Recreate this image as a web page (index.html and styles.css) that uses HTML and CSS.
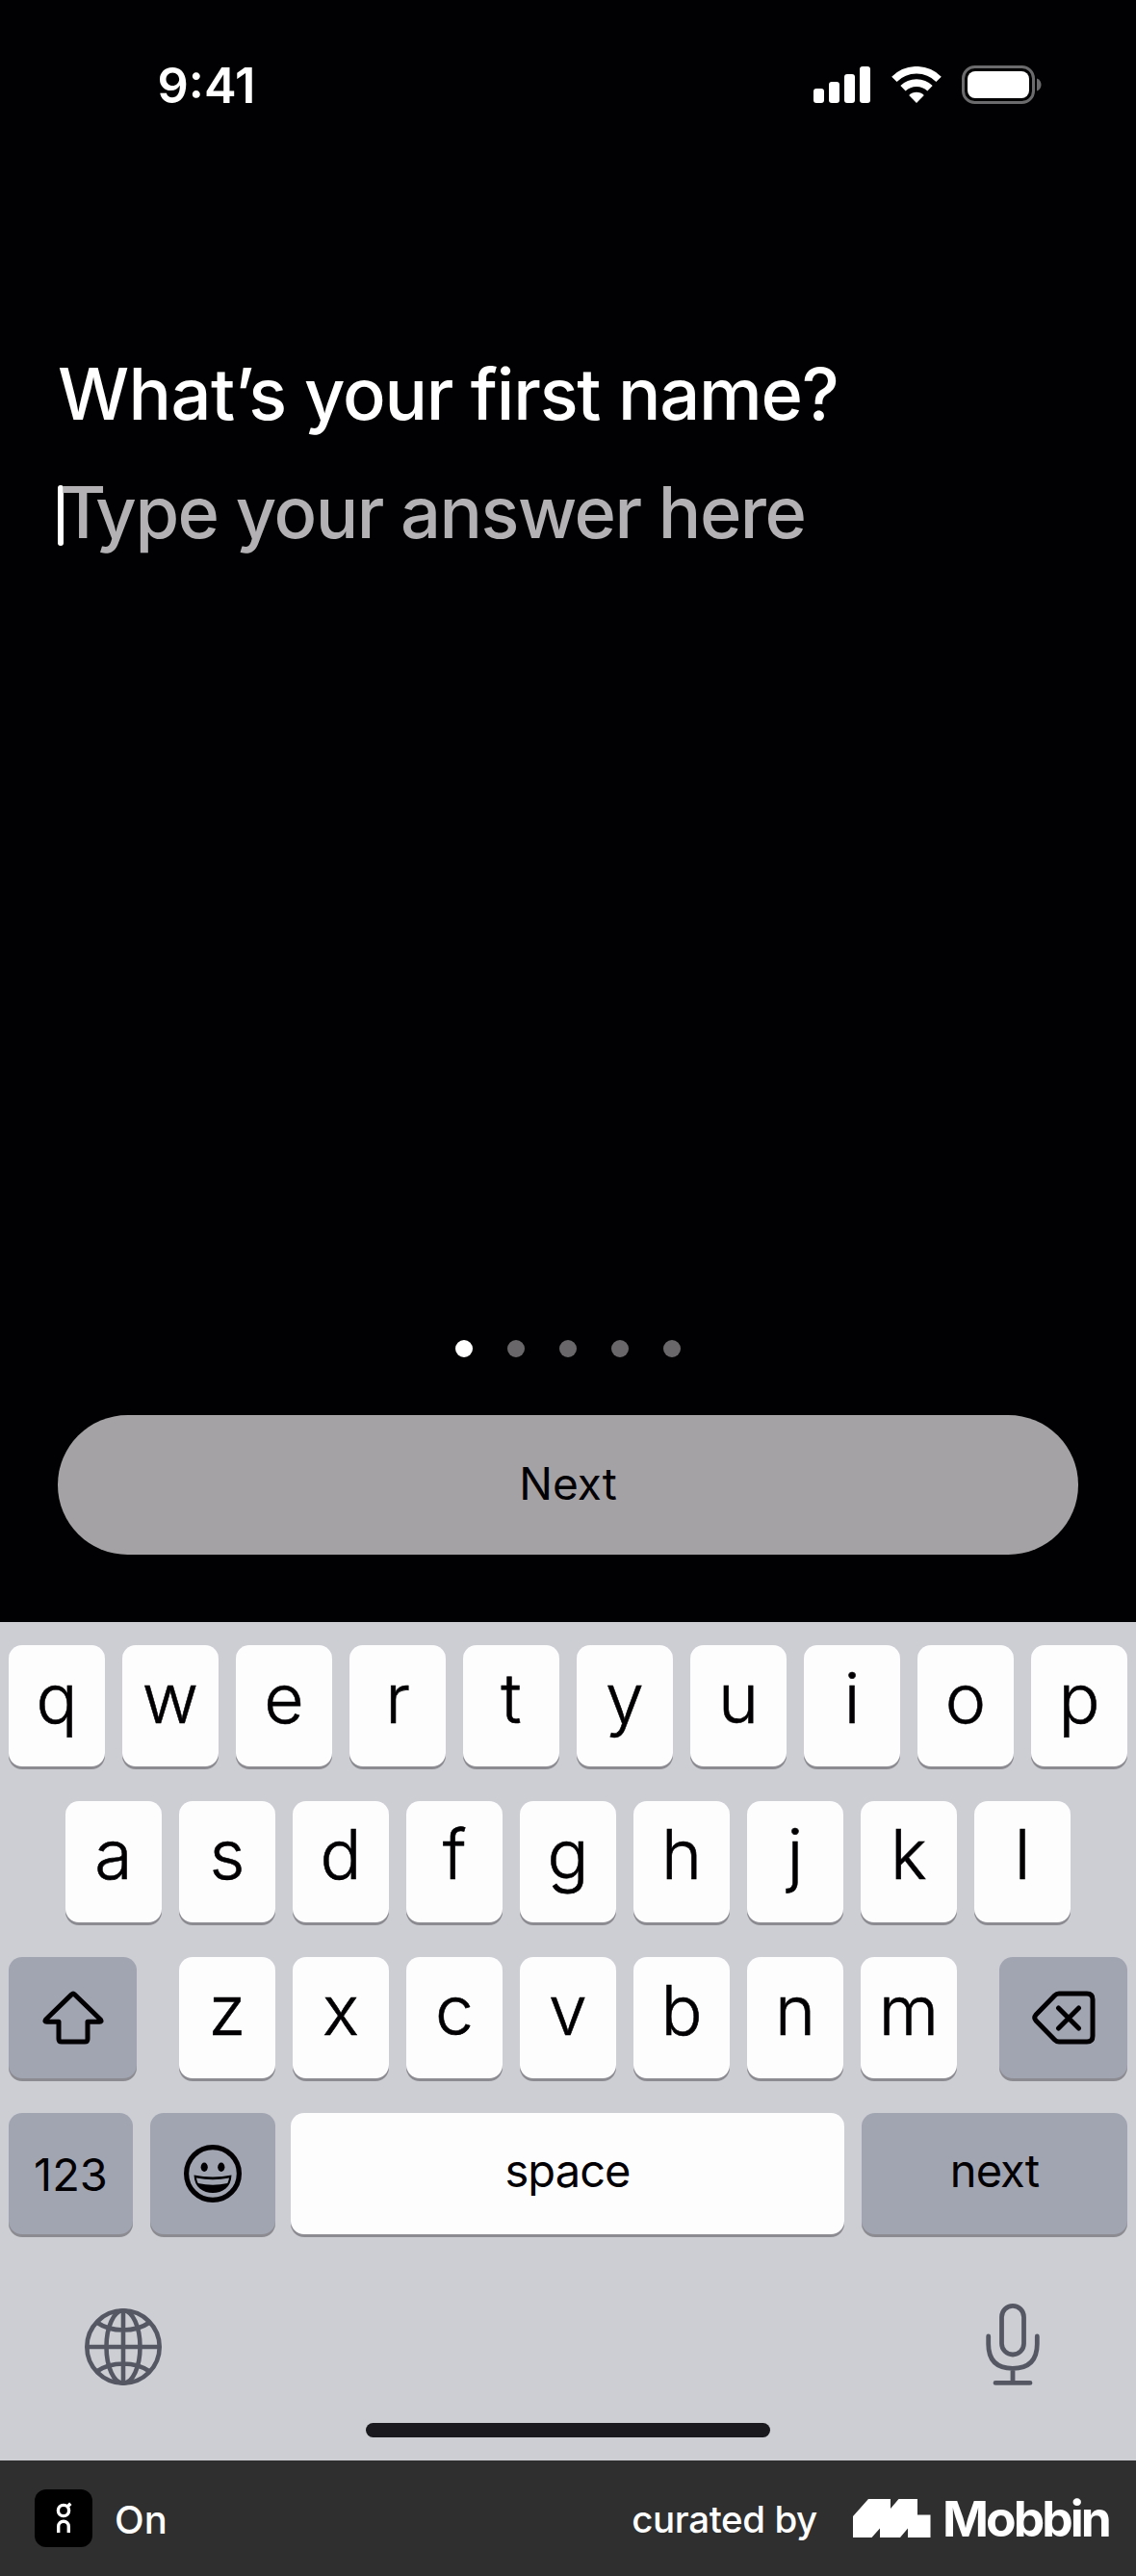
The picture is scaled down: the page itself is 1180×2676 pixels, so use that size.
FILE: index.html
```html
<!DOCTYPE html>
<html lang="en">
<head>
<meta charset="utf-8">
<title>What’s your first name?</title>
<link rel="stylesheet" href="styles.css">
</head>
<body>
<main class="screen">
  <header class="status">
    <span class="time">9:41</span>
    <div class="indicators">
      <svg class="signal" width="59" height="38" viewBox="0 0 59 38" fill="#fff">
        <rect x="0" y="23" width="11" height="15" rx="3"/><rect x="16" y="16" width="11" height="22" rx="3"/><rect x="32" y="8" width="11" height="30" rx="3"/><rect x="48" y="0" width="11" height="38" rx="3"/>
      </svg>
      <svg class="wifi" width="52" height="38" viewBox="0 0 52 38">
        <g fill="none" stroke="#fff" stroke-width="7.600"><path d="M2.900 13.400a32.500 32.500 0 0 1 46.200 0"/><path d="M12 22.800a20 20 0 0 1 28 0"/></g>
        <path d="M26 38l-7.800-8.100a11 11 0 0 1 15.600 0z" fill="#fff"/>
      </svg>
      <svg class="battery" width="83" height="40" viewBox="0 0 83 40">
        <rect x="1.500" y="1.500" width="73" height="37" rx="12" fill="none" stroke="#6b6a6c" stroke-width="3"/>
        <rect x="6" y="6" width="64" height="28" rx="8" fill="#fff"/>
        <path d="M78 13.500c6 2 6 11 0 13z" fill="#6b6a6c"/>
      </svg>
    </div>
  </header>

  <section class="question">
    <h1 class="title"><span class="lead">What’s</span> your first name?</h1>
    <div class="answer"><i class="caret"></i><span class="placeholder"><span class="kern">T</span>ype your answer here</span></div>
  </section>

  <section class="actions">
    <div class="dots"><i class="dot on"></i><i class="dot"></i><i class="dot"></i><i class="dot"></i><i class="dot"></i></div>
    <button class="next">Next</button>
  </section>
</main>

<section class="keyboard">
  <div class="row"><b class="key">q</b><b class="key">w</b><b class="key">e</b><b class="key">r</b><b class="key">t</b><b class="key">y</b><b class="key">u</b><b class="key">i</b><b class="key">o</b><b class="key">p</b></div>
  <div class="row"><b class="key">a</b><b class="key">s</b><b class="key">d</b><b class="key">f</b><b class="key">g</b><b class="key">h</b><b class="key">j</b><b class="key">k</b><b class="key">l</b></div>
  <div class="row spread">
    <b class="key fn side">
      <svg width="64" height="56" viewBox="0 0 64 56" fill="none" stroke="#020003" stroke-width="5" stroke-linejoin="round"><path d="M30.400 3.900q1.600-1.600 3.200 0L60.500 30q1.500 2.300-1 2.300H47V50q0 3-3 3H20q-3 0-3-3V32.300H4.500q-2.500 0-1-2.300z"/></svg>
    </b>
    <div class="row"><b class="key">z</b><b class="key">x</b><b class="key">c</b><b class="key">v</b><b class="key">b</b><b class="key">n</b><b class="key">m</b></div>
    <b class="key fn side">
      <svg width="66" height="56" viewBox="0 0 66 56" fill="none" stroke="#020003" stroke-width="5" stroke-linejoin="round" stroke-linecap="round"><path d="M28 3H57q6 0 6 6V47q0 6-6 6H28q-2.500 0-4.500-2L4 31q-2.500-3 0-6L23.500 5q2-2 4.500-2zM27.500 18l21 21M48.500 18l-21 21"/></svg>
    </b>
  </div>
  <div class="row bottom">
    <b class="key fn num">123</b>
    <b class="key fn emoji">
      <svg width="60" height="60" viewBox="0 0 60 60"><circle cx="30" cy="30" r="27.400" fill="none" stroke="#020003" stroke-width="5.200"/><ellipse cx="21.200" cy="23.200" rx="3.600" ry="4.700" fill="#020003"/><ellipse cx="38.800" cy="23.200" rx="3.600" ry="4.700" fill="#020003"/><path d="M10.500 31.500q19.500 4 39 0-.5 9.500-6 14-6 4.500-13.500 4.500t-13.500-4.500q-5.500-4.500-6-14z" fill="#020003"/><path d="M13 34.500q17 3.500 34 0-.4 3-1.700 5.500-15.300 3.500-30.600 0Q13.400 37.500 13 34.500z" fill="#a1a5b1"/></svg>
    </b>
    <b class="key word space">space</b>
    <b class="key fn word go">next</b>
  </div>
  <div class="tools">
    <svg width="80" height="80" viewBox="0 0 80 80" fill="none" stroke="#555863" stroke-width="4.600"><circle cx="40" cy="40" r="37.700"/><ellipse cx="40" cy="40" rx="17.500" ry="37.700"/><path d="M40 2v76M2 40h76M12.500 14.500Q24 22.500 40 22.500T67.500 14.500M12.500 65.500Q24 57.500 40 57.500T67.500 65.500"/></svg>
    <svg width="56" height="85" viewBox="0 0 56 85" fill="none" stroke="#555863" stroke-width="4.800" stroke-linecap="round"><rect x="16.500" y="2.400" width="23" height="50.600" rx="11.500"/><path d="M2.700 34v8q0 25.300 25.300 25.300T53.300 42v-8M28 68v14M10 82.400h36"/></svg>
  </div>
  <div class="home"></div>
</section>

<footer class="footer">
  <svg class="app" width="60" height="60" viewBox="0 0 60 60"><rect width="60" height="60" rx="12"/><g fill="none" stroke="#fff" stroke-width="3.400"><circle cx="30" cy="22" r="5.600"/><path d="M33.500 18.500l3.800-3.800M24.700 45v-6.500a5.300 5.300 0 0 1 10.600 0V45"/></g></svg>
  <span class="name">On</span>
  <span class="curated">curated by</span>
  <svg class="mark" width="81" height="40" viewBox="0 0 81 40" fill="#fff"><path d="M0 18L16 0h23v10L47.500 0H67v16.500h13.500V40H57V30.500L49 40H28V30.500L19.500 40H0z"/></svg>
  <span class="brand">Mobbin</span>
</footer>
</body>
</html>
```
FILE: styles.css
```css
* { box-sizing: border-box; }
body {
  margin: 0;
  width: 1180px;
  height: 2676px;
  display: flex;
  flex-direction: column;
  background: #010002;
  color: #fff;
  font-family: Inter, "Liberation Sans", sans-serif;
}
svg { display: block; flex: none; }

.screen { height: 1685px; display: flex; flex-direction: column; }
.status {
  height: 176px;
  padding: 0 98px 0 163.500px;
  display: flex;
  align-items: center;
  justify-content: space-between;
}
.time { margin-top: 2px; font-size: 50.500px; font-weight: 600; line-height: 60px; }
.indicators { display: flex; align-items: center; }
.wifi { margin: 0 21px 0 22px; }

.question { padding: 186px 60px 0; }
.title, .answer { margin: 0; height: 94px; font-size: 74px; font-weight: 500; line-height: 94px; white-space: nowrap; }
.title { letter-spacing: -1.200px; }
.lead { letter-spacing: -.600px; }
.answer { margin-top: 29px; display: flex; align-items: center; letter-spacing: -1.500px; color: #b3b1b4; }
.caret { width: 6px; height: 63px; margin-top: 6px; border-radius: 3px; background: #fff; }
.placeholder { margin-left: -4px; }
.kern { letter-spacing: -11px; }

.actions { margin-top: auto; padding: 0 60px 70px; }
.dots { display: flex; justify-content: center; gap: 36px; }
.dot { width: 18px; height: 18px; border-radius: 50%; background: #69676a; }
.dot.on { background: #fff; }
.next {
  display: block;
  width: 1060px;
  height: 145px;
  margin-top: 60px;
  padding: 0 0 4px;
  border: 0;
  border-radius: 73px;
  background: #a4a2a5;
  color: #020003;
  font: 400 46px Inter, sans-serif;
}

.keyboard {
  height: 871px;
  padding-top: 24px;
  display: flex;
  flex-direction: column;
  gap: 36px;
  background: #cdced4;
  color: #020003;
}
.row { display: flex; justify-content: center; gap: 18px; }
.spread { justify-content: space-between; padding: 0 9px; }
.key {
  width: 100px;
  height: 126px;
  padding-bottom: 15px;
  display: flex;
  align-items: center;
  justify-content: center;
  border-radius: 14px;
  background: #fefdfe;
  box-shadow: 0 3px 0 #8b8b91;
  font-size: 71.500px;
  font-weight: 300;
  line-height: 1;
  -webkit-text-stroke: .6px #020003;
}
.fn { background: #a1a5b1; padding-bottom: 0; }
.side { width: 133px; }
.bottom { padding: 0 9px; }
.num, .word { font-size: 47px; font-weight: 400; -webkit-text-stroke: 0; }
.num { width: 129px; }
.word { padding-bottom: 8px; letter-spacing: -.900px; }
.emoji { width: 130px; margin-right: -2px; }
.space { flex: 1; }
.go { width: 276px; }
.tools { padding: 41px 100px 0 88px; display: flex; justify-content: space-between; align-items: flex-start; }
.tools svg:last-child { margin-top: -5px; }
.home { width: 420px; height: 15px; margin: auto auto 24px; border-radius: 8px; background: #1a1a1e; }

.footer {
  height: 120px;
  padding: 0 28px 0 36px;
  display: flex;
  align-items: center;
  background: #2f2f2f;
  white-space: nowrap;
}
.name { margin: 2px 0 0 23px; font-size: 40px; font-weight: 500; }
.curated { margin: 2px 0 0 auto; font-size: 38.500px; font-weight: 500; letter-spacing: -.400px; }
.mark { margin: -1px 0 0 37px; }
.brand { margin-left: 12px; font-size: 51.500px; font-weight: 700; letter-spacing: -2.900px; }
```
